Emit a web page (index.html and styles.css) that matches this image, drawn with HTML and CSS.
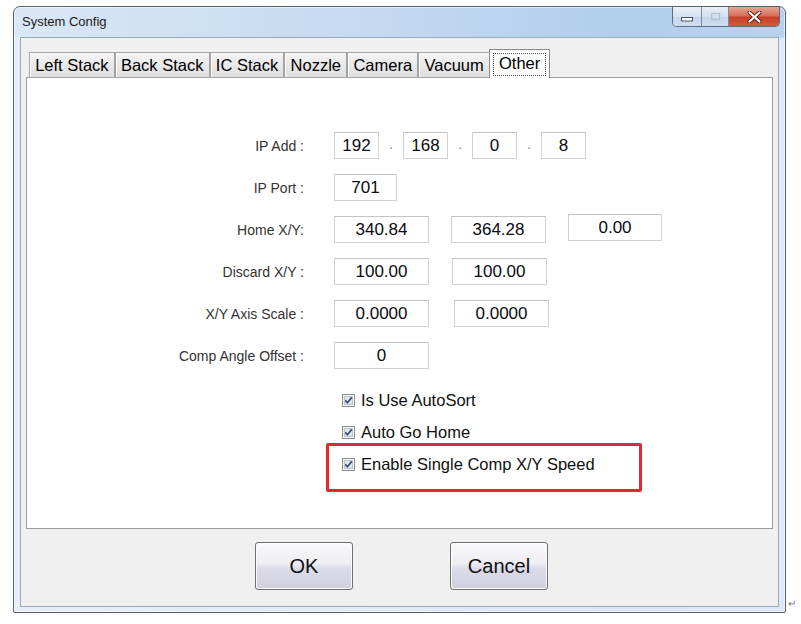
FILE: index.html
```html
<!DOCTYPE html>
<html lang="en">
<head>
    <meta charset="UTF-8">
    <meta name="viewport" content="width=device-width, initial-scale=1.0">
    <title>System Config</title>
    <link rel="stylesheet" href="styles.css">
</head>
<body>

    <div class="page">
        <div class="window">
            <div class="titlebar">
                <span class="title">System Config</span>
                <div class="caption-buttons">
                    <span class="cap-btn cap-min">
                        <svg width="14" height="6" viewBox="0 0 14 6"><rect x="1.5" y="1.5" width="11" height="3.5" fill="#fff" stroke="#48566a"/></svg>
                    </span>
                    <span class="cap-btn cap-max">
                        <svg width="11" height="9" viewBox="0 0 11 9"><rect x="1.5" y="1.5" width="8" height="6" fill="none" stroke="#b3c1d1" stroke-width="1.4"/><rect x="3.5" y="3.5" width="4" height="2" fill="none" stroke="#d6e0ec"/></svg>
                    </span>
                    <span class="cap-btn cap-close">
                        <svg width="15" height="12" viewBox="0 0 15 12"><path d="M2.5 1.5 L12.5 10.5 M12.5 1.5 L2.5 10.5" stroke="#5a1a12" stroke-width="4" stroke-linecap="round"/><path d="M2.5 1.5 L12.5 10.5 M12.5 1.5 L2.5 10.5" stroke="#fff" stroke-width="2.2" stroke-linecap="round"/></svg>
                    </span>
                </div>
            </div>

            <div class="client">
                <div class="tabs">
                    <div class="tab">Left Stack</div>
                    <div class="tab">Back Stack</div>
                    <div class="tab">IC Stack</div>
                    <div class="tab">Nozzle</div>
                    <div class="tab">Camera</div>
                    <div class="tab">Vacuum</div>
                    <div class="tab active"><span class="focus">Other</span></div>
                </div>

                <div class="panel">
                    <div class="form">
                        <span class="label">IP Add :</span>
                        <div class="fields row-ip">
                            <input class="box ip" type="text" value="192" readonly>
                            <span class="dot">&middot;</span>
                            <input class="box ip" type="text" value="168" readonly>
                            <span class="dot">&middot;</span>
                            <input class="box ip" type="text" value="0" readonly>
                            <span class="dot">&middot;</span>
                            <input class="box ip" type="text" value="8" readonly>
                        </div>

                        <span class="label">IP Port :</span>
                        <div class="fields">
                            <input class="box port" type="text" value="701" readonly>
                        </div>

                        <span class="label">Home X/Y:</span>
                        <div class="fields row-home">
                            <input class="box num" type="text" value="340.84" readonly>
                            <input class="box num" type="text" value="364.28" readonly>
                            <input class="box num raised" type="text" value="0.00" readonly>
                        </div>

                        <span class="label">Discard X/Y :</span>
                        <div class="fields row-discard">
                            <input class="box num" type="text" value="100.00" readonly>
                            <input class="box num" type="text" value="100.00" readonly>
                        </div>

                        <span class="label">X/Y Axis Scale :</span>
                        <div class="fields row-scale">
                            <input class="box num" type="text" value="0.0000" readonly>
                            <input class="box num" type="text" value="0.0000" readonly>
                        </div>

                        <span class="label">Comp Angle Offset :</span>
                        <div class="fields">
                            <input class="box num" type="text" value="0" readonly>
                        </div>
                    </div>

                    <div class="checks">
                        <div class="check">
                            <svg class="tick" width="13" height="13" viewBox="0 0 13 13"><rect x="0.5" y="0.5" width="12" height="12" fill="#f7f7f7" stroke="#8e8f8f"/><rect x="2.5" y="2.5" width="8" height="8" fill="#e4e4e6" stroke="#c4c4c8"/><path d="M3.3 6.4 L5.4 8.8 L9.8 3.4" fill="none" stroke="#3b4d86" stroke-width="1.7"/></svg>
                            <span>Is Use AutoSort</span>
                        </div>
                        <div class="check">
                            <svg class="tick" width="13" height="13" viewBox="0 0 13 13"><rect x="0.5" y="0.5" width="12" height="12" fill="#f7f7f7" stroke="#8e8f8f"/><rect x="2.5" y="2.5" width="8" height="8" fill="#e4e4e6" stroke="#c4c4c8"/><path d="M3.3 6.4 L5.4 8.8 L9.8 3.4" fill="none" stroke="#3b4d86" stroke-width="1.7"/></svg>
                            <span>Auto Go Home</span>
                        </div>
                        <div class="highlight">
                            <div class="check">
                                <svg class="tick" width="13" height="13" viewBox="0 0 13 13"><rect x="0.5" y="0.5" width="12" height="12" fill="#f7f7f7" stroke="#8e8f8f"/><rect x="2.5" y="2.5" width="8" height="8" fill="#e4e4e6" stroke="#c4c4c8"/><path d="M3.3 6.4 L5.4 8.8 L9.8 3.4" fill="none" stroke="#3b4d86" stroke-width="1.7"/></svg>
                                <span>Enable Single Comp X/Y Speed</span>
                            </div>
                        </div>
                    </div>
                </div>

                <div class="actions">
                    <button class="btn">OK</button>
                    <button class="btn">Cancel</button>
                </div>
            </div>
        </div>
        <span class="para-mark">&#8629;</span>
    </div>

</body>
</html>
```

FILE: styles.css
```css
body {
    margin: 0;
    background-color: #fff;
    font-family: "Liberation Sans", Arial, sans-serif;
}

.page {
    display: flex;
    align-items: flex-end;
    padding: 6px 0 0 13px;
}

/* window frame */
.window {
    width: 773px;
    height: 607px;
    box-sizing: border-box;
    border: 1px solid #55616d;
    border-radius: 7px 7px 2px 2px;
    padding-bottom: 5px;
    background: linear-gradient(to bottom, rgba(255, 255, 255, 0) 0, rgba(255, 255, 255, 0) 30px, rgba(235, 242, 250, 0.7) 31px),
                linear-gradient(to right, #dae7f6, #c4daf1 45%, #b2ceec 80%, #b9d3ee);
    box-shadow: inset 0 0 0 1px rgba(255, 255, 255, 0.55);
}

.titlebar {
    height: 30px;
    display: flex;
    justify-content: space-between;
    align-items: flex-start;
    padding: 0 5px 0 8px;
}

.title {
    align-self: center;
    margin-bottom: 2px;
    font-size: 13px;
    color: #1a1a1a;
}

.caption-buttons {
    display: flex;
    height: 19px;
    border: 1px solid #5f6c7b;
    border-top: none;
    border-radius: 0 0 5px 5px;
    overflow: hidden;
}

.cap-btn {
    display: flex;
    align-items: center;
    justify-content: center;
    background: linear-gradient(to bottom, #e9f0f8, #d5e2f0 50%, #c3d5ea 51%, #cfdff0);
}

.cap-min {
    width: 29px;
    border-right: 1px solid #7d8b9a;
    padding-top: 5px;
    box-sizing: border-box;
}

.cap-max {
    width: 26px;
    border-right: 1px solid #7d8b9a;
}

.cap-close {
    width: 50px;
    background: linear-gradient(to bottom, #e6a594, #d7705b 45%, #c83f27 55%, #d05b3e);
}

/* client area */
.client {
    margin: 0 6px;
    height: 570px;
    box-sizing: border-box;
    border: 1px solid #9aaabb;
    background-color: #f0f0f0;
    padding-top: 11px;
}

.tabs {
    position: relative;
    z-index: 1;
    display: flex;
    align-items: flex-end;
    height: 29px;
    margin: 0 5px -1px;
    padding-left: 3px;
}

.tab {
    height: 26px;
    box-sizing: border-box;
    padding: 0 5.2px;
    border: 1px solid #a4a4a4;
    background: linear-gradient(to bottom, #f4f4f4, #e9e9e9 50%, #dedede);
    box-shadow: inset 1px 1px 0 #fbfbfb;
    font-size: 16.5px;
    line-height: 24px;
    color: #000;
    white-space: nowrap;
}

.tab.active {
    height: 29px;
    padding: 3px 3px 0;
    border-color: #8a8d94;
    border-bottom: none;
    background: #fff;
    box-shadow: none;
    margin-left: -1px;
}

.focus {
    display: block;
    height: 23px;
    box-sizing: border-box;
    padding: 0 5px;
    border: 1px dotted #4a4a4a;
    line-height: 19px;
}

.panel {
    height: 452px;
    box-sizing: border-box;
    margin: 0 5px;
    border: 1px solid #9c9c9c;
    background-color: #fff;
    padding-top: 54px;
}

/* form rows */
.form {
    display: grid;
    grid-template-columns: 277px auto;
    grid-auto-rows: 27px;
    column-gap: 30px;
    row-gap: 15px;
}

.label {
    align-self: center;
    text-align: right;
    font-size: 14px;
    line-height: 16px;
    color: #333;
}

.fields {
    display: flex;
    align-items: center;
    gap: 22px;
}

.row-ip {
    gap: 0;
}

.row-home {
    align-items: flex-start;
}

.row-discard {
    gap: 23px;
}

.row-scale {
    gap: 25px;
}

.box {
    height: 27px;
    box-sizing: border-box;
    padding: 0;
    border: 1px solid #d2d2d2;
    border-top-color: #c4c4c4;
    background-color: #fff;
    font-family: "Liberation Sans", Arial, sans-serif;
    font-size: 17px;
    color: #0a0a14;
    text-align: center;
    outline: none;
}

.ip {
    width: 45px;
}

.port {
    width: 63px;
}

.num {
    width: 95px;
}

.raised {
    margin-top: -2px;
    width: 94px;
}

.dot {
    width: 24px;
    padding-top: 3px;
    text-align: center;
    font-size: 14px;
    color: #888;
}

/* checkboxes */
.checks {
    margin: 21px 0 0 315px;
}

.check {
    display: flex;
    align-items: center;
    gap: 6px;
    height: 20px;
    font-size: 16.5px;
    color: #111;
}

.check + .check {
    margin-top: 12px;
}

.tick {
    flex-shrink: 0;
}

.highlight {
    width: 316px;
    box-sizing: border-box;
    margin: 1px 0 0 -16px;
    padding: 8px 0 15px 13px;
    border: 3px solid #e8262b;
    border-radius: 2px;
}

/* dialog buttons */
.actions {
    display: flex;
    justify-content: center;
    gap: 97px;
    padding: 13px 0 0 4px;
}

.btn {
    width: 98px;
    height: 48px;
    border: 1px solid #707070;
    border-radius: 3px;
    background: linear-gradient(to bottom, #fafafa, #eeedf4 45%, #dcdbe9 55%, #d0cfe0);
    box-shadow: inset 0 0 0 1px #fbfbfd;
    font-family: "Liberation Sans", Arial, sans-serif;
    font-size: 20px;
    color: #111;
    cursor: pointer;
}

.para-mark {
    margin: 0 0 4px 2px;
    font-size: 10px;
    color: #777;
}
```
